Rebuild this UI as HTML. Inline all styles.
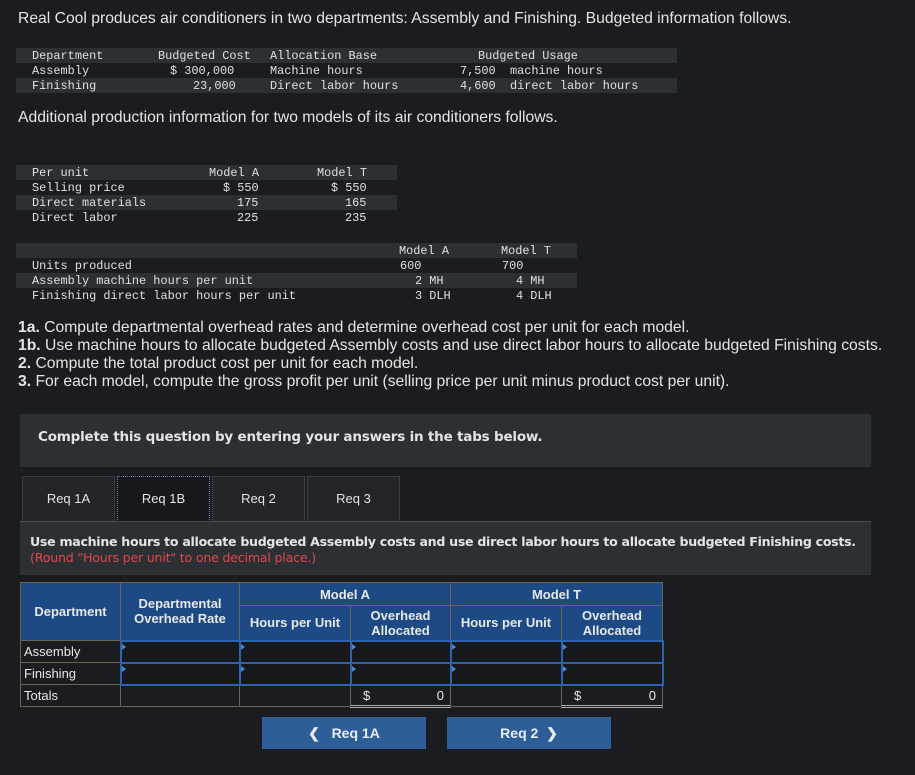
<!DOCTYPE html>
<html><head><style>
*{margin:0;padding:0;box-sizing:border-box}
body{width:915px;height:775px;background:#1b1c1f;color:#e4e4e4;font-family:"Liberation Sans",sans-serif;position:relative;overflow:hidden}
.a{position:absolute;white-space:pre}
.t{font-size:15.7px}
.m{font-family:"Liberation Mono",monospace;font-size:11.9px;color:#e0e0e0}
.band{position:absolute;background:#2c2f33}
.tab{position:absolute;top:476px;height:46px;width:93px;border:1px solid #3a3d42;border-bottom:none;background:#222427;font-size:13px;text-align:center;line-height:44px}
table{position:absolute;left:20px;top:582px;border-collapse:collapse;font-size:13px}
td,th{border:1px solid #6b6358;padding:0}
th{background:#1d4a85;color:#e8e8e8;font-weight:bold;font-size:13px;line-height:15px}
td{height:22px;color:#e8e8e8}
td.in{background:#17181b;border:2px solid #2d62ad;position:relative}
td.in:before{content:"";position:absolute;left:0;top:2px;border-left:4px solid #4a86d0;border-top:3px solid transparent;border-bottom:3px solid transparent}
.btn{position:absolute;top:717px;height:32px;width:164px;background:#2e5e98;color:#e8eef6;font-weight:bold;font-size:14px;text-align:center;line-height:32px}
</style></head><body>
<div class="a t" style="left:18px;top:10px">Real Cool produces air conditioners in two departments: Assembly and Finishing. Budgeted information follows.</div>

<div class="band" style="left:16px;top:48px;width:661px;height:15px"></div>
<div class="band" style="left:16px;top:78px;width:661px;height:15px"></div>
<div class="a m" style="left:32px;top:49px">Department</div>
<div class="a m" style="left:158px;top:49px">Budgeted Cost</div>
<div class="a m" style="left:270px;top:49px">Allocation Base</div>
<div class="a m" style="left:478px;top:49px">Budgeted Usage</div>
<div class="a m" style="left:32px;top:64px">Assembly</div>
<div class="a m" style="left:170px;top:64px">$ 300,000</div>
<div class="a m" style="left:270px;top:64px">Machine hours</div>
<div class="a m" style="left:460px;top:64px">7,500  machine hours</div>
<div class="a m" style="left:32px;top:79px">Finishing</div>
<div class="a m" style="left:193px;top:79px">23,000</div>
<div class="a m" style="left:270px;top:79px">Direct labor hours</div>
<div class="a m" style="left:460px;top:79px">4,600  direct labor hours</div>

<div class="a t" style="left:18px;top:109px">Additional production information for two models of its air conditioners follows.</div>

<div class="band" style="left:16px;top:165px;width:381px;height:15px"></div>
<div class="band" style="left:16px;top:195px;width:381px;height:15px"></div>
<div class="a m" style="left:32px;top:166px">Per unit</div>
<div class="a m" style="left:209px;top:166px">Model A</div>
<div class="a m" style="left:317px;top:166px">Model T</div>
<div class="a m" style="left:32px;top:181px">Selling price</div>
<div class="a m" style="left:223px;top:181px">$ 550</div>
<div class="a m" style="left:331px;top:181px">$ 550</div>
<div class="a m" style="left:32px;top:196px">Direct materials</div>
<div class="a m" style="left:237px;top:196px">175</div>
<div class="a m" style="left:345px;top:196px">165</div>
<div class="a m" style="left:32px;top:211px">Direct labor</div>
<div class="a m" style="left:237px;top:211px">225</div>
<div class="a m" style="left:345px;top:211px">235</div>

<div class="band" style="left:16px;top:243px;width:561px;height:15px"></div>
<div class="band" style="left:16px;top:273px;width:561px;height:15px"></div>
<div class="a m" style="left:399px;top:244px">Model A</div>
<div class="a m" style="left:501px;top:244px">Model T</div>
<div class="a m" style="left:32px;top:259px">Units produced</div>
<div class="a m" style="left:400px;top:259px">600</div>
<div class="a m" style="left:502px;top:259px">700</div>
<div class="a m" style="left:32px;top:274px">Assembly machine hours per unit</div>
<div class="a m" style="left:415px;top:274px">2 MH</div>
<div class="a m" style="left:516px;top:274px">4 MH</div>
<div class="a m" style="left:32px;top:289px">Finishing direct labor hours per unit</div>
<div class="a m" style="left:415px;top:289px">3 DLH</div>
<div class="a m" style="left:516px;top:289px">4 DLH</div>

<div class="a t" style="left:18px;top:319px"><b>1a.</b> Compute departmental overhead rates and determine overhead cost per unit for each model.</div>
<div class="a t" style="left:18px;top:337px"><b>1b.</b> Use machine hours to allocate budgeted Assembly costs and use direct labor hours to allocate budgeted Finishing costs.</div>
<div class="a t" style="left:18px;top:355px"><b>2.</b> Compute the total product cost per unit for each model.</div>
<div class="a t" style="left:18px;top:373px"><b>3.</b> For each model, compute the gross profit per unit (selling price per unit minus product cost per unit).</div>

<div class="band" style="left:20px;top:414px;width:851px;height:53px"></div>
<div class="a" style="left:38px;top:429px;font-size:13.5px;font-weight:bold;font-family:'DejaVu Sans',sans-serif;letter-spacing:-0.2px">Complete this question by entering your answers in the tabs below.</div>

<div class="tab" style="left:22px">Req 1A</div>
<div class="tab" style="left:117px;background:#17181b;border:1px dotted #5b7fb5">Req 1B</div>
<div class="tab" style="left:212px">Req 2</div>
<div class="tab" style="left:307px">Req 3</div>
<div class="band" style="left:20px;top:521px;width:851px;height:54px;border-top:1px solid #4a4d52"></div>
<div class="a" style="left:30px;top:534px;font-size:12.6px;font-weight:bold;font-family:'DejaVu Sans',sans-serif;letter-spacing:-0.3px">Use machine hours to allocate budgeted Assembly costs and use direct labor hours to allocate budgeted Finishing costs.</div>
<div class="a" style="left:30px;top:550px;font-size:12.6px;color:#e0474c;font-family:'DejaVu Sans',sans-serif;letter-spacing:-0.2px">(Round "Hours per unit" to one decimal place.)</div>

<table>
<tr><th rowspan="2" style="width:100px;height:58px">Department</th><th rowspan="2" style="width:119px">Departmental<br>Overhead Rate</th><th colspan="2" style="height:23px">Model A</th><th colspan="2">Model T</th></tr>
<tr><th style="width:111px;height:35px">Hours per Unit</th><th style="width:100px">Overhead<br>Allocated</th><th style="width:111px">Hours per Unit</th><th style="width:101px">Overhead<br>Allocated</th></tr>
<tr><td style="padding-left:3px">Assembly</td><td class="in"></td><td class="in"></td><td class="in"></td><td class="in"></td><td class="in"></td></tr>
<tr><td style="padding-left:3px">Finishing</td><td class="in"></td><td class="in"></td><td class="in"></td><td class="in"></td><td class="in"></td></tr>
<tr><td style="padding-left:3px">Totals</td><td></td><td></td><td style="padding:0 6px 0 12px;border-bottom:3px double #aaa"><span>$</span><span style="float:right">0</span></td><td></td><td style="padding:0 6px 0 12px;border-bottom:3px double #aaa"><span>$</span><span style="float:right">0</span></td></tr>
</table>

<div class="btn" style="left:262px">&#10094;&nbsp;&nbsp; Req 1A</div>
<div class="btn" style="left:447px">Req 2 &nbsp;&#10095;</div>
</body></html>
